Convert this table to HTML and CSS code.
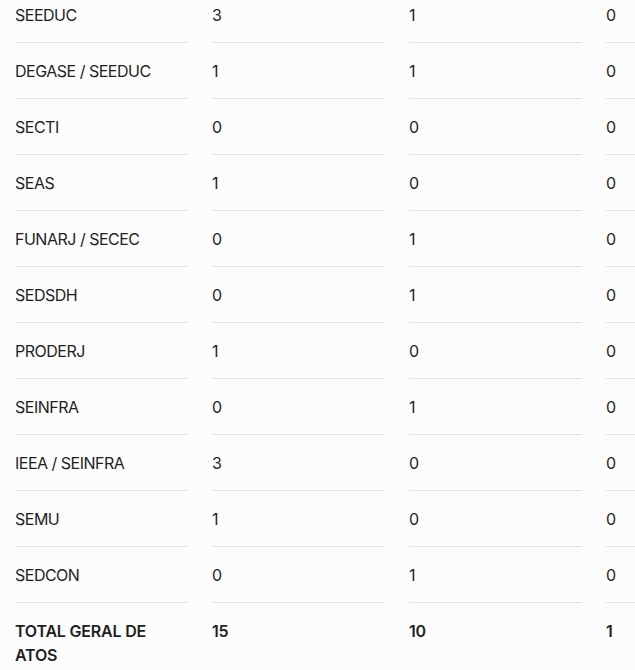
FILE: index.html
```html
<!DOCTYPE html>
<html lang="pt">
<head>
<meta charset="utf-8">
<title>Atos</title>
<link rel="stylesheet" href="styles.css">
</head>
<body>
<div class="page">
  <div class="grid">
    <div class="cell">SEEDUC</div><div class="cell">3</div><div class="cell">1</div><div class="cell">0</div>
    <div class="cell">DEGASE / SEEDUC</div><div class="cell">1</div><div class="cell">1</div><div class="cell">0</div>
    <div class="cell">SECTI</div><div class="cell">0</div><div class="cell">0</div><div class="cell">0</div>
    <div class="cell">SEAS</div><div class="cell">1</div><div class="cell">0</div><div class="cell">0</div>
    <div class="cell">FUNARJ / SECEC</div><div class="cell">0</div><div class="cell">1</div><div class="cell">0</div>
    <div class="cell">SEDSDH</div><div class="cell">0</div><div class="cell">1</div><div class="cell">0</div>
    <div class="cell">PRODERJ</div><div class="cell">1</div><div class="cell">0</div><div class="cell">0</div>
    <div class="cell">SEINFRA</div><div class="cell">0</div><div class="cell">1</div><div class="cell">0</div>
    <div class="cell">IEEA / SEINFRA</div><div class="cell">3</div><div class="cell">0</div><div class="cell">0</div>
    <div class="cell">SEMU</div><div class="cell">1</div><div class="cell">0</div><div class="cell">0</div>
    <div class="cell">SEDCON</div><div class="cell">0</div><div class="cell">1</div><div class="cell">0</div>
    <div class="cell total">TOTAL GERAL DE ATOS</div><div class="cell total">15</div><div class="cell total">10</div><div class="cell total">1</div>
  </div>
</div>
</body>
</html>
```
FILE: styles.css
```css
html, body {
  margin: 0;
  padding: 0;
  background: #fcfcfc;
  overflow: hidden;
}
.page {
  width: 635px;
  height: 670px;
  overflow: hidden;
}
.grid {
  display: grid;
  grid-template-columns: repeat(4, 173px);
  column-gap: 24px;
  padding-left: 15px;
  margin-top: -13px;
  font-family: Inter, "Open Sans", sans-serif;
  font-size: 16px;
  line-height: 24px;
  letter-spacing: -0.5px;
  color: #1f1f1f;
}
.cell {
  padding: 16px 0 15px;
  border-bottom: 1px solid #e3e3e3;
}
.total {
  font-weight: 600;
  letter-spacing: -0.2px;
  border-bottom: none;
}
```
